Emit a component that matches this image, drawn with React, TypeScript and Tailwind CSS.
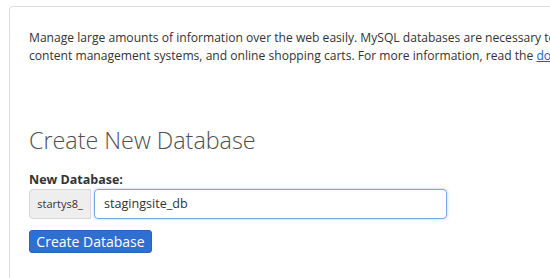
import { useState } from "react";

const App = () => {
  const [dbName, setDbName] = useState<string>("stagingsite_db");

  return (
    <div className="w-[550px] h-[278px] overflow-hidden bg-white pt-[6px] pl-[9px] font-['Open_Sans',sans-serif] text-[#333]">
      {/* Panel */}
      <div className="w-[900px] h-[300px] border border-[#dcdcdc] rounded-[4px] pl-[19px] pt-[22px]">
        {/* Description */}
        <p className="text-[12.1px] leading-[18px] whitespace-nowrap">
          Manage large amounts of information over the web easily. MySQL databases are necessary to run many web-based applications.
          <br />
          content management systems, and online shopping carts. For more information, read the{" "}
          <a href="#" className="text-[#1a5fc9] underline">
            documentation
          </a>
          .
        </p>

        {/* Create form */}
        <h2 className="mt-[60px] text-[23.3px] leading-[30px] font-light text-[#4f4f4f]">Create New Database</h2>

        <div className="mt-[17px]">
          <label className="block text-[12.5px] leading-[16px] font-bold text-[#333]">New Database:</label>
          <div className="flex mt-[1px] h-[30px] w-[418px]">
            <span className="flex items-center w-[62px] justify-center bg-[#eeeeee] border border-[#d6d6d6] rounded-l-[4px] text-[11px] text-[#333]">
              startys8_
            </span>
            <input
              value={dbName}
              onChange={(e) => setDbName(e.target.value)}
              className="flex-1 ml-[3px] px-[9px] border border-[#7aa6de] rounded-[4px] text-[12.6px] text-[#333] outline-none shadow-[0_0_3px_rgba(102,175,233,0.6)]"
            />
          </div>
        </div>

        <button className="mt-[11px] h-[23px] w-[123px] rounded-[3px] bg-[#2f6fd2] border border-[#2a63bd] text-white text-[14px] leading-[20px]">
          Create Database
        </button>
      </div>
    </div>
  );
};

export default App;
